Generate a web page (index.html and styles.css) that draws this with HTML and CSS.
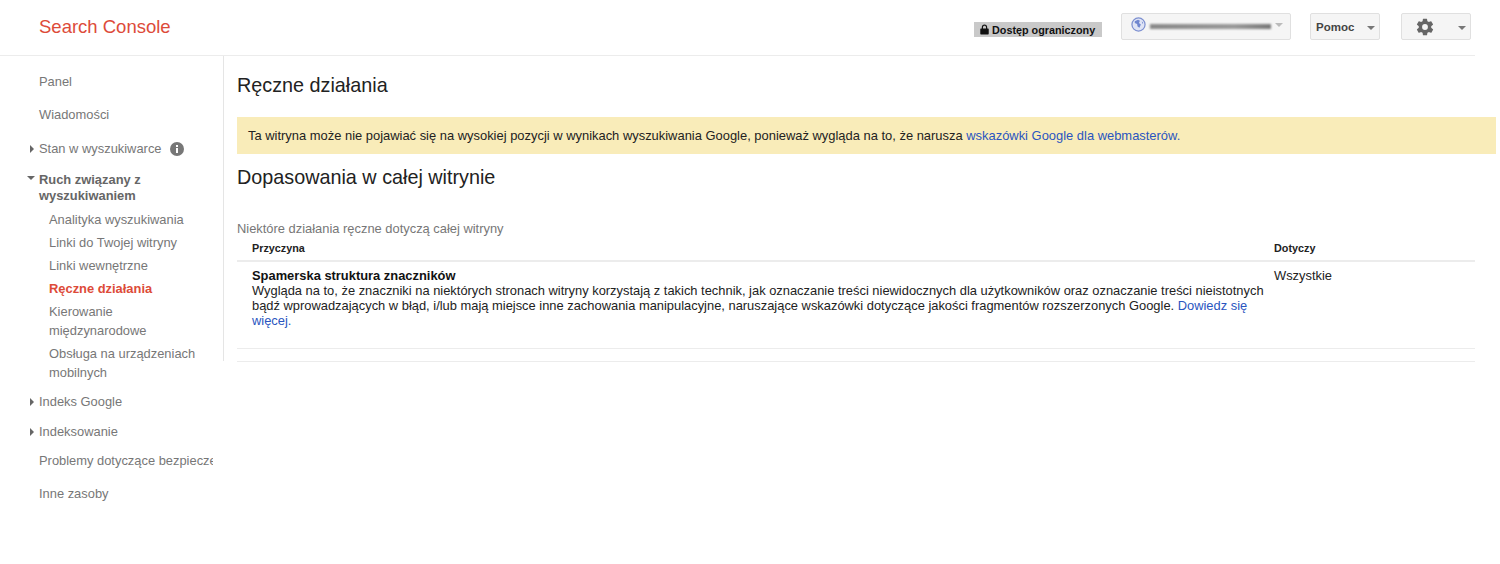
FILE: index.html
```html
<!DOCTYPE html>
<html lang="pl">
<head>
<meta charset="utf-8">
<title>Search Console</title>
<link rel="stylesheet" href="styles.css">
</head>
<body>
<header class="top">
  <div class="logo">Search Console</div>
  <div class="tools">
    <div class="restricted">
      <svg class="lock" viewBox="0 0 10 12" width="9" height="11"><path fill="#111" d="M1 5h1V3.400C2 1.700 3.300.5 5 .5s3 1.200 3 2.900V5h1c.4 0 .7.3.7.7v5c0 .4-.3.8-.7.8H1c-.4 0-.7-.4-.7-.8v-5C.3 5.300.6 5 1 5zm2.300 0h3.400V3.400C6.700 2.400 6 1.700 5 1.700s-1.700.7-1.700 1.700V5z"/></svg>
      <span>Dostęp ograniczony</span>
    </div>
    <div class="btn site">
      <svg class="globe" viewBox="0 0 16 16" width="15" height="15"><circle cx="8" cy="8" r="7" fill="#dfe4f5" stroke="#7c8fd0" stroke-width="1.300"/><path fill="#6f86cf" d="M4 4.500 7.500 3l2 1-1 2.500 2 1.500-1.500 3.500L7 10 6.500 7.500 4 6.500zM11.500 4.500l1.500 2-1 .8z"/></svg>
      <div class="redacted"></div>
      <i class="caret light"></i>
    </div>
    <div class="btn help"><span>Pomoc</span><i class="caret"></i></div>
    <div class="btn gear">
      <svg viewBox="0 0 24 24" width="20" height="20"><path fill="#666" d="M19.400 13c.05-.33.1-.66.1-1s-.05-.67-.1-1l2.100-1.650c.2-.15.25-.42.12-.64l-2-3.460c-.12-.22-.39-.3-.61-.22l-2.490 1c-.52-.4-1.080-.73-1.690-.98l-.38-2.650A.5.500 0 0 0 14 2h-4a.5.500 0 0 0-.49.420l-.38 2.650c-.61.25-1.170.59-1.690.98l-2.490-1c-.23-.09-.49 0-.61.220l-2 3.460c-.13.22-.07.49.12.640L4.570 11c-.04.330-.07.660-.07 1s.03.670.07 1l-2.110 1.650c-.19.150-.25.420-.12.640l2 3.460c.12.220.39.300.61.220l2.490-1c.52.400 1.080.730 1.690.980l.38 2.650c.03.240.240.420.490.420h4c.250 0 .460-.180.490-.420l.38-2.650c.61-.250 1.170-.590 1.690-.980l2.490 1c.23.090.49 0 .61-.220l2-3.460c.12-.220.070-.490-.12-.640L19.400 13zM12 15.500a3.500 3.500 0 1 1 0-7 3.500 3.500 0 0 1 0 7z"/></svg>
      <i class="caret"></i>
    </div>
  </div>
</header>
<div class="layout">
  <nav class="side">
    <div class="inner">
      <a class="item first">Panel</a>
      <a class="item">Wiadomości</a>
      <a class="item has-arrow"><i class="arrow"></i>Stan w wyszukiwarce
        <svg class="info" viewBox="0 0 14 14" width="14" height="14"><circle cx="7" cy="7" r="7" fill="#777"/><rect x="6" y="6" width="2" height="5" fill="#fff"/><rect x="6" y="3" width="2" height="2" fill="#fff"/></svg>
      </a>
      <div class="group">
        <div class="group-title"><i class="arrow open"></i>Ruch związany z wyszukiwaniem</div>
        <a class="sub">Analityka wyszukiwania</a>
        <a class="sub">Linki do Twojej witryny</a>
        <a class="sub">Linki wewnętrzne</a>
        <a class="sub active">Ręczne działania</a>
        <a class="sub">Kierowanie międzynarodowe</a>
        <a class="sub">Obsługa na urządzeniach mobilnych</a>
      </div>
      <a class="item has-arrow tight"><i class="arrow"></i>Indeks Google</a>
      <a class="item has-arrow tight"><i class="arrow"></i>Indeksowanie</a>
      <a class="item clip">Problemy dotyczące bezpieczeństwa</a>
      <a class="item">Inne zasoby</a>
    </div>
  </nav>
  <main class="main">
    <h1>Ręczne działania</h1>
    <div class="banner">Ta witryna może nie pojawiać się na wysokiej pozycji w wynikach wyszukiwania Google, ponieważ wygląda na to, że narusza <a>wskazówki Google dla webmasterów.</a></div>
    <h2>Dopasowania w całej witrynie</h2>
    <p class="note">Niektóre działania ręczne dotyczą całej witryny</p>
    <div class="table">
      <div class="row head">
        <div class="c1">Przyczyna</div>
        <div class="c2">Dotyczy</div>
      </div>
      <div class="row body">
        <div class="c1">
          <strong>Spamerska struktura znaczników</strong>
          <div>Wygląda na to, że znaczniki na niektórych stronach witryny korzystają z takich technik, jak oznaczanie treści niewidocznych dla użytkowników oraz oznaczanie treści nieistotnych bądź wprowadzających w błąd, i/lub mają miejsce inne zachowania manipulacyjne, naruszające wskazówki dotyczące jakości fragmentów rozszerzonych Google. <a>Dowiedz się więcej.</a></div>
        </div>
        <div class="c2">Wszystkie</div>
      </div>
      <div class="row foot"></div>
    </div>
  </main>
</div>
</body>
</html>
```
FILE: styles.css
```css
* { box-sizing: border-box; }
html, body { margin: 0; padding: 0; }
body { width: 1500px; height: 564px; overflow: hidden; background: #fff; font-family: "Liberation Sans", Arial, sans-serif; font-size: 12.900px; color: #222; }
a { color: #2a55c0; }

.top { height: 56px; width: 1475px; border-bottom: 1px solid #ececec; display: flex; align-items: flex-start; justify-content: space-between; }
.logo { margin: 16px 0 0 39px; font-size: 18.500px; line-height: 22px; color: #dd4b39; }
.tools { display: flex; align-items: flex-start; padding-top: 13px; margin-right: 4px; }
.restricted { margin: 9px 19px 0 0; width: 128px; height: 15px; background: #c9c9c9; display: flex; align-items: center; padding-left: 6px; gap: 3px; font-size: 10.800px; font-weight: 700; color: #111; white-space: nowrap; }
.lock { flex: none; }
.btn { height: 27px; background: #f5f5f5; border: 1px solid #e0e0e0; border-radius: 2px; display: flex; align-items: center; position: relative; }
.site { width: 170px; padding-left: 9px; }
.globe { flex: none; margin-top: -4px; }
.redacted { width: 121px; height: 5px; margin-left: 4px; background: linear-gradient(90deg, #888, #999 70%, #777); filter: blur(1px); }
.help { width: 70px; margin-left: 19px; padding-left: 5px; font-size: 11.500px; font-weight: 700; color: #444; }
.gear { width: 70px; margin-left: 21px; padding-left: 13px; }
.caret { position: absolute; right: 4px; top: 12px; width: 0; height: 0; border-left: 4px solid transparent; border-right: 4px solid transparent; border-top: 4px solid #777; }
.caret.light { border-top-color: #bbb; right: 7px; top: 9px; }

.layout { display: flex; align-items: flex-start; }
.side { width: 224px; height: 305px; border-right: 1px solid #e5e5e5; flex: none; }
.inner { width: 213px; height: 460px; padding-top: 9px; color: #777; line-height: 19px; }
.item { display: block; position: relative; padding-left: 39px; height: 34px; line-height: 34px; color: #777; white-space: nowrap; overflow: hidden; }
.item.first { height: 33px; }
.item.has-arrow { overflow: visible; }
.item.tight { height: 29.500px; line-height: 29.500px; }
.item.clip { height: 33px; margin-top: -2px; }
.arrow { position: absolute; left: 30px; top: 13px; width: 0; height: 0; border-top: 4px solid transparent; border-bottom: 4px solid transparent; border-left: 4px solid #666; }
.tight .arrow { top: 11px; }
.arrow.open { left: 27px; top: 10px; border-left: 4px solid transparent; border-right: 4px solid transparent; border-top: 4px solid #666; border-bottom: 0; }
.info { position: absolute; left: 170px; top: 10px; }
.group { padding-bottom: 1px; }
.group-title { position: relative; padding: 6px 20px 0 39px; font-weight: 700; line-height: 16px; color: #666; margin-bottom: 6px; }
.sub { display: block; padding-left: 49px; padding-right: 8px; margin-bottom: 4px; color: #777; line-height: 19px; }
.sub.active { color: #dd4b39; font-weight: 700; }

.main { flex: 1; min-width: 0; padding-left: 13px; }
h1 { margin: 17px 0 0; font-size: 19.800px; font-weight: 400; line-height: 24px; color: #222; }
.banner { margin-top: 20px; width: 1259px; height: 37px; background: #f9ecb9; padding-left: 11px; line-height: 37px; font-size: 12.930px; white-space: nowrap; color: #222; }
h2 { margin: 11px 0 0; font-size: 19.800px; font-weight: 400; line-height: 24px; color: #222; }
.note { margin: 32px 0 0; line-height: 16px; color: #777; }
.table { width: 1238px; margin-top: 2px; }
.row { display: flex; border-bottom: 1px solid #ececec; }
.c1 { width: 1037px; padding: 0 0 0 15px; flex: none; }
.c2 { padding-left: 0; }
.head { height: 23px; border-bottom-width: 2px; font-size: 10.800px; font-weight: 700; line-height: 18px; color: #222; }
.body { height: 87px; padding-top: 6px; line-height: 15px; color: #222; }
.body .c1 { padding-right: 6px; }
.body strong { display: block; color: #111; }
.foot { height: 13px; }
```
